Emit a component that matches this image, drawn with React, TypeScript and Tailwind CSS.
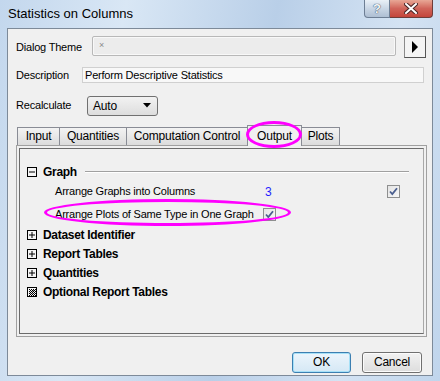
import { ReactNode } from 'react';

function Check() {
  return (
    <div className="w-[13px] h-[13px] border border-[#8e8f8f] bg-gradient-to-br from-[#e4e4e4] to-[#f7f7f7] flex items-center justify-center">
      <svg width="9" height="9" viewBox="0 0 9 9">
        <path d="M1 4.5 L3.3 7 L8 1.2" stroke="#4b5f8f" strokeWidth="1.8" fill="none" />
      </svg>
    </div>
  );
}

function Toggle({ open }: { open: boolean }) {
  return (
    <svg width="10" height="10" viewBox="0 0 10 10" className="shrink-0">
      <rect x="0.5" y="0.5" width="9" height="9" fill="#f5f5f5" stroke="#000" />
      <path d="M2 5 H8" stroke="#000" />
      {!open && <path d="M5 2 V8" stroke="#000" />}
    </svg>
  );
}

function DottedBox() {
  const dots = [];
  for (let y = 2; y < 9; y++) {
    for (let x = 2; x < 9; x++) {
      if ((x + y) % 2 === 0) dots.push(<rect key={`${x}-${y}`} x={x} y={y} width="1" height="1" fill="#000" />);
    }
  }
  return (
    <svg width="10" height="10" viewBox="0 0 10 10" className="shrink-0">
      <rect x="0.5" y="0.5" width="9" height="9" fill="#f5f5f5" stroke="#000" />
      {dots}
      <path d="M3 5 L4.5 6.8 L7.2 3.2" stroke="#000" fill="none" />
    </svg>
  );
}

function Section({ children, box }: { children: ReactNode; box: ReactNode }) {
  return (
    <div className="h-[19px] flex items-center pl-[7px] gap-[6px]">
      {box}
      <span className="font-bold text-[12px] tracking-[-0.3px] text-black">{children}</span>
    </div>
  );
}

function Tab({ label, w, active }: { label: string; w: string; active?: boolean }) {
  if (active) {
    return (
      <div className={`${w} h-[21px] -mb-px -ml-px relative z-10 border border-b-0 border-[#898c95] bg-[#f0f0f0] flex items-center justify-center text-[12px]`}>
        {label}
      </div>
    );
  }
  return (
    <div className={`${w} h-[18px] -ml-px border border-b-0 border-[#898c95] bg-gradient-to-b from-[#f3f3f3] to-[#dcdcdc] flex items-center justify-center text-[12px]`}>
      {label}
    </div>
  );
}

export default function App() {
  return (
    <div className="w-[440px] h-[381px] relative overflow-hidden font-['Liberation_Sans',Arial,sans-serif] text-black bg-[linear-gradient(100deg,#c3d7ed_0%,#d9e7f5_25%,#b9cfe8_55%,#d4e3f3_80%,#c0d5ec_100%)] flex flex-col">
      {/* Title bar */}
      <div className="h-[28px] flex items-start justify-between">
        <span className="pl-[8px] pt-[4px] text-[13px] text-black">Statistics on Columns</span>
        <div className="flex mr-[7px]">
          <div className="w-[26px] h-[18px] rounded-bl-[4px] border border-t-0 border-[#6d7e94] bg-gradient-to-b from-[#e9f0f7] via-[#c9d6e5] to-[#aebfd3] flex items-center justify-center text-[13px] font-bold text-[#f4f7fa] [text-shadow:0_0_1px_#33475f,0_0_1px_#33475f]">
            ?
          </div>
          <div className="w-[43px] h-[18px] rounded-br-[4px] border border-t-0 border-l-0 border-[#6e3d3a] bg-gradient-to-b from-[#e8a796] via-[#d0645a] to-[#c4453b] flex items-center justify-center">
            <svg width="14" height="11" viewBox="0 0 14 11">
              <path d="M2 1 L12 10 M12 1 L2 10" stroke="#4a2424" strokeWidth="4" strokeLinecap="square" />
              <path d="M2 1 L12 10 M12 1 L2 10" stroke="#ffffff" strokeWidth="2" strokeLinecap="square" />
            </svg>
          </div>
        </div>
      </div>

      {/* Client area */}
      <div className="mx-[7px] h-[348px] border border-[#7d8a99] bg-[#f0f0f0] text-[11px] tracking-[-0.2px]">
        <div className="mt-[7px] flex items-start pl-[8px]">
          <span className="w-[76px] pt-[3px]">Dialog Theme</span>
          <div className="w-[304px] h-[20px] border border-[#b8b8b8] rounded-[2px] bg-[#ececec] shadow-[inset_0_0_0_1px_#f8f8f8] text-[9px] text-[#8a8a8a] pl-[6px] pt-[2px]">
            ×
          </div>
          <div className="ml-[8px] w-[22px] h-[22px] border border-[#8a8a8a] border-r-[#555] border-b-[#555] bg-[#f4f4f4] flex items-center justify-center">
            <svg width="8" height="12" viewBox="0 0 8 12">
              <path d="M1 0 L7 6 L1 12 Z" fill="#000" />
            </svg>
          </div>
        </div>

        <div className="mt-[9px] flex items-center pl-[8px]">
          <span className="w-[66px]">Description</span>
          <div className="w-[342px] h-[16px] border border-[#d0d0d0] bg-[#f8f8f8] pl-[2px] leading-[14px]">
            Perform Descriptive Statistics
          </div>
        </div>

        <div className="mt-[12px] flex items-center pl-[8px]">
          <span className="w-[71px]">Recalculate</span>
          <div className="w-[71px] h-[20px] rounded-[3px] border border-[#707070] bg-gradient-to-b from-[#f2f2f2] to-[#dddddd] flex items-center justify-between pl-[5px] pr-[6px] text-[12px]">
            <span>Auto</span>
            <svg width="8" height="5" viewBox="0 0 8 5">
              <path d="M0 0 H8 L4 4.5 Z" fill="#000" />
            </svg>
          </div>
        </div>

        {/* Tabs */}
        <div className="mt-[8px] ml-[10px] h-[21px] flex items-end">
          <Tab label="Input" w="w-[43px]" />
          <Tab label="Quantities" w="w-[68px]" />
          <Tab label="Computation Control" w="w-[122px]" />
          <Tab label="Output" w="w-[55px]" active />
          <Tab label="Plots" w="w-[39px]" />
        </div>

        {/* Tab panel */}
        <div className="ml-[8px] w-[411px] h-[192px] border border-[#a0a0a0] p-[2px]">
          <div className="h-full border border-[#6b6b6b] border-r-[#a8a8a8] border-b-[#6b6b6b] pt-[13px] pr-[14px]">
            <div className="h-[20px] flex items-center pl-[7px] gap-[6px]">
              <Toggle open />
              <span className="font-bold text-[12px] tracking-[-0.3px]">Graph</span>
              <div className="flex-1 ml-[2px] border-t border-[#a0a0a0] border-b border-b-white" />
            </div>
            <div className="h-[20px] flex items-center pl-[35px]">
              <span className="w-[210px]">Arrange Graphs into Columns</span>
              <span className="w-[122px] text-[#1f1fff] text-[12px]">3</span>
              <Check />
            </div>
            <div className="h-[24px] flex items-center pl-[35px] pt-[2px]">
              <span className="w-[208px]">Arrange Plots of Same Type in One Graph</span>
              <Check />
            </div>
            <Section box={<Toggle open={false} />}>Dataset Identifier</Section>
            <Section box={<Toggle open={false} />}>Report Tables</Section>
            <Section box={<Toggle open={false} />}>Quantities</Section>
            <Section box={<DottedBox />}>Optional Report Tables</Section>
          </div>
        </div>

        {/* Buttons */}
        <div className="mt-[15px] flex justify-end gap-[11px] pr-[10px]">
          <div className="w-[59px] h-[21px] rounded-[3px] border border-[#3c7fb1] shadow-[inset_0_0_0_1px_#a6e0f7] bg-gradient-to-b from-[#ecf5fc] to-[#d5e8f5] flex items-center justify-center text-[12px]">
            OK
          </div>
          <div className="w-[60px] h-[21px] rounded-[3px] border border-[#707070] shadow-[inset_0_0_0_1px_#fbfbfb] bg-gradient-to-b from-[#f2f2f2] to-[#dddddd] flex items-center justify-center text-[12px]">
            Cancel
          </div>
        </div>
      </div>

      {/* Magenta highlight ovals */}
      <div className="absolute left-[246px] top-[121px] w-[56px] h-[27px] rounded-[50%] border-[3px] border-[#ff00ff] pointer-events-none z-20" />
      <div className="absolute left-[44px] top-[199px] w-[247px] h-[27px] rounded-[50%] border-[3px] border-[#ff00ff] pointer-events-none z-20" />
    </div>
  );
}
